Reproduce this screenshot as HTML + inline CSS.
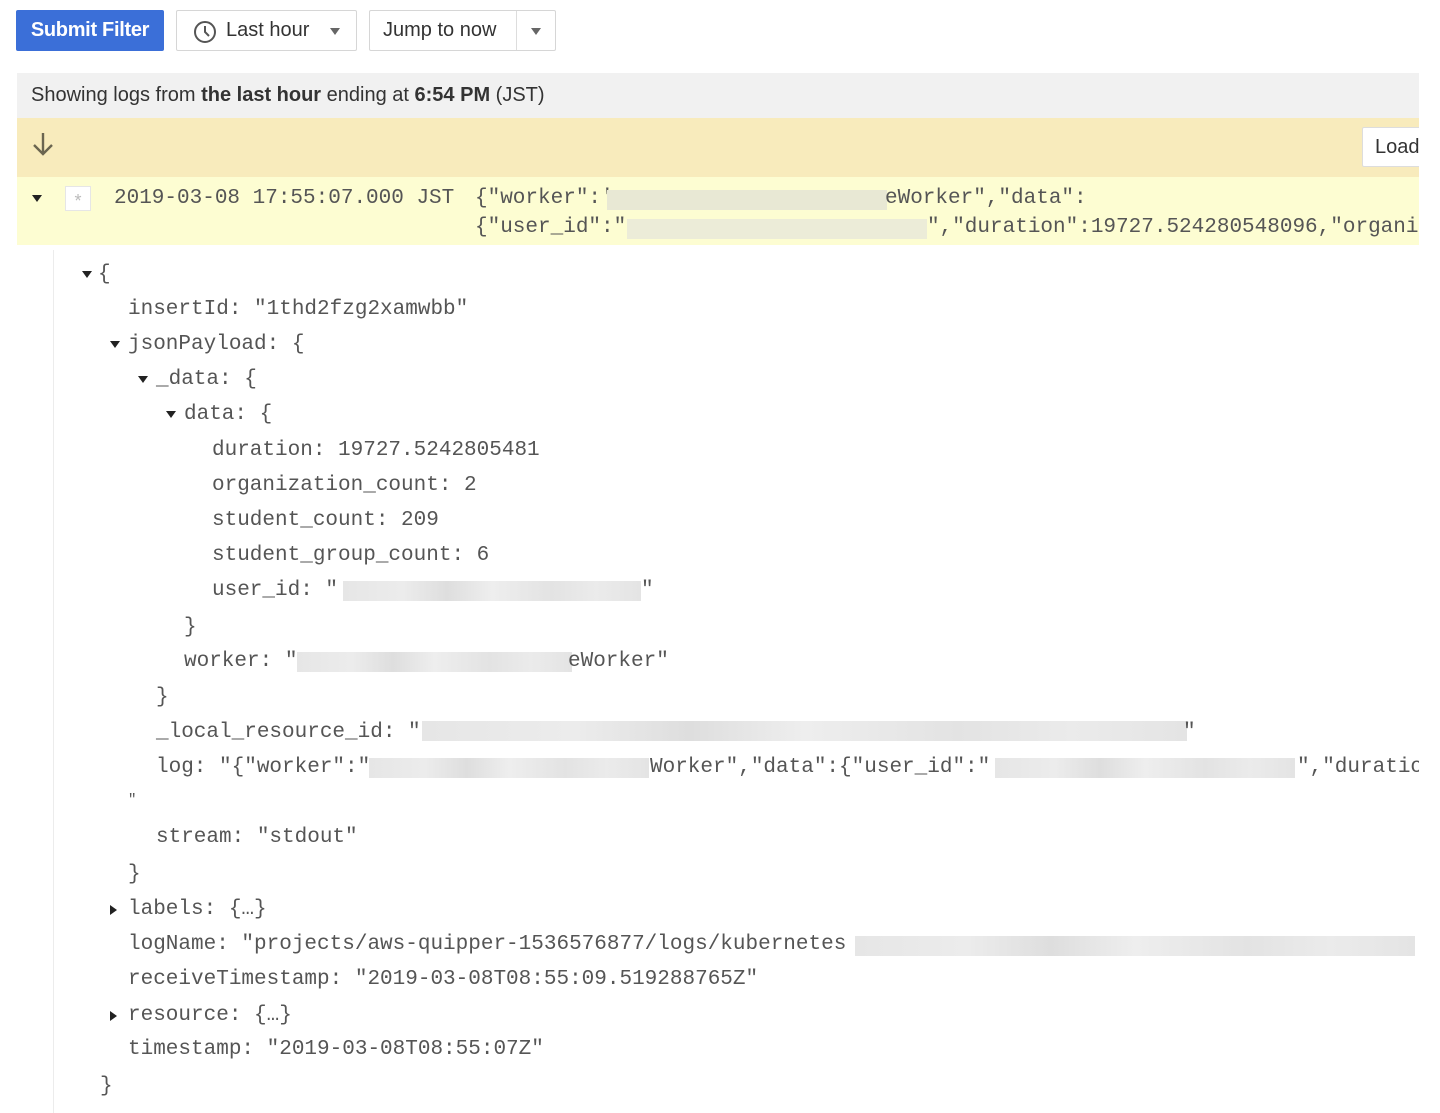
<!DOCTYPE html>
<html><head><meta charset="utf-8"><style>
*{margin:0;padding:0;box-sizing:border-box}
body{width:1440px;height:1113px;background:#fff;position:relative;overflow:hidden;font-family:"Liberation Sans",sans-serif;color:#333}
.btn{position:absolute;top:10px;height:41px;border:1px solid #d6d6d6;border-radius:2px;background:#fff;font-size:20px;line-height:39px;color:#333}
.m{font-family:"Liberation Mono",monospace;font-size:21px;color:#555;white-space:pre;position:absolute;line-height:24px;height:24px}
.b{position:absolute;height:20px;background:linear-gradient(90deg,#e6e6e6,#ececec 20%,#dedede 35%,#eee 50%,#e3e3e3 70%,#ebebeb 85%,#e4e4e4)}
.t{position:absolute;width:0;height:0;border-left:5px solid transparent;border-right:5px solid transparent;border-top:7px solid #222}
.r{position:absolute;width:0;height:0;border-top:5px solid transparent;border-bottom:5px solid transparent;border-left:7px solid #222}
#clip{position:absolute;left:0;top:3px;width:1419px;height:1110px;overflow:hidden}
</style></head><body>
<div style="position:absolute;left:16px;top:10px;width:148px;height:41px;background:#3b6fd8;border-radius:2px;color:#fff;font-size:20px;font-weight:bold;line-height:41px;text-align:center;letter-spacing:-0.3px">Submit Filter</div>
<div class="btn" style="left:176px;width:181px">
<svg style="position:absolute;left:16px;top:9px" width="24" height="24" viewBox="0 0 24 24"><circle cx="12" cy="12" r="10" fill="none" stroke="#555" stroke-width="2"/><path d="M12 6v6l4 4" fill="none" stroke="#555" stroke-width="2"/></svg>
<span style="position:absolute;left:49px">Last hour</span>
<div class="t" style="left:153px;top:17px;border-top-color:#666"></div></div>
<div class="btn" style="left:369px;width:187px">
<span style="position:absolute;left:13px">Jump to now</span>
<div style="position:absolute;left:146px;top:0;width:1px;height:39px;background:#ddd"></div>
<div class="t" style="left:161px;top:17px;border-top-color:#666"></div></div>

<div style="position:absolute;left:17px;top:73px;width:1402px;height:45px;background:#f1f1f1;font-size:20px;line-height:45px;padding-left:14px;color:#333">Showing logs from <b>the last hour</b> ending at <b>6:54 PM</b> (JST)</div>
<div style="position:absolute;left:17px;top:118px;width:1402px;height:59px;background:#f8ebbc"></div>
<svg style="position:absolute;left:31px;top:130px" width="24" height="28" viewBox="0 0 24 28"><path d="M12 3v21M3 15l9 9 9-9" fill="none" stroke="#6b6550" stroke-width="2.4"/></svg>
<div style="position:absolute;left:1362px;top:127px;width:70px;height:40px;background:#fff;border:1px solid #ddd;border-radius:2px;font-size:20px;line-height:38px;padding-left:12px;color:#333">Load</div>
<div style="position:absolute;left:1419px;top:118px;width:21px;height:60px;background:#fff"></div>
<div style="position:absolute;left:17px;top:177px;width:1402px;height:68px;background:#fdfdd2"></div>
<div class="t" style="left:32px;top:195px"></div>
<div style="position:absolute;left:65px;top:186px;width:26px;height:25px;background:#fff;border:1px solid #e6e6e6;color:#bbb;font-size:18px;text-align:center;line-height:28px">*</div>
<div style="position:absolute;left:53px;top:250px;width:1px;height:863px;background:#ececec"></div>

<div id="clip">
<div class="m" style="left:114px;top:184px">2019-03-08 17:55:07.000 JST</div>
<div class="m" style="left:475px;top:184px">{"worker":'</div>
<div class="b" style="left:607px;top:187px;width:280px;background:#e8e8d4"></div>
<div class="m" style="left:885px;top:184px">eWorker","data":</div>
<div class="m" style="left:475px;top:213px">{"user_id":"</div>
<div class="b" style="left:627px;top:216px;width:300px;background:#ececd8"></div>
<div class="m" style="left:927px;top:213px">","duration":19727.524280548096,"organization_count":2</div>

<div class="t" style="left:82px;top:268px"></div><div class="m" style="left:98px;top:260px">{</div>
<div class="m" style="left:128px;top:295px">insertId: "1thd2fzg2xamwbb"</div>
<div class="t" style="left:110px;top:338px"></div><div class="m" style="left:128px;top:330px">jsonPayload: {</div>
<div class="t" style="left:138px;top:373px"></div><div class="m" style="left:156px;top:365px">_data: {</div>
<div class="t" style="left:166px;top:408px"></div><div class="m" style="left:184px;top:400px">data: {</div>
<div class="m" style="left:212px;top:436px">duration: 19727.5242805481</div>
<div class="m" style="left:212px;top:471px">organization_count: 2</div>
<div class="m" style="left:212px;top:506px">student_count: 209</div>
<div class="m" style="left:212px;top:541px">student_group_count: 6</div>
<div class="m" style="left:212px;top:576px">user_id: "</div>
<div class="b" style="left:343px;top:578px;width:298px"></div>
<div class="m" style="left:641px;top:576px">"</div>
<div class="m" style="left:184px;top:613px">}</div>
<div class="m" style="left:184px;top:647px">worker: "</div>
<div class="b" style="left:297px;top:649px;width:275px"></div>
<div class="m" style="left:568px;top:647px">eWorker"</div>
<div class="m" style="left:156px;top:683px">}</div>
<div class="m" style="left:156px;top:718px">_local_resource_id: "</div>
<div class="b" style="left:422px;top:718px;width:765px"></div>
<div class="m" style="left:1183px;top:718px">"</div>
<div class="m" style="left:156px;top:753px">log: "{"worker":"</div>
<div class="b" style="left:369px;top:755px;width:280px"></div>
<div class="m" style="left:650px;top:753px">Worker","data":{"user_id":"</div>
<div class="b" style="left:995px;top:755px;width:300px"></div>
<div class="m" style="left:1297px;top:753px">","duration":19727</div>
<div class="m" style="left:128px;top:785px;font-size:14px">"</div>
<div class="m" style="left:156px;top:823px">stream: "stdout"</div>
<div class="m" style="left:128px;top:860px">}</div>
<div class="r" style="left:110px;top:902px"></div><div class="m" style="left:128px;top:895px">labels: {…}</div>
<div class="m" style="left:128px;top:930px">logName: "projects/aws-quipper-1536576877/logs/kubernetes</div>
<div class="b" style="left:855px;top:933px;width:560px"></div>
<div class="m" style="left:128px;top:965px">receiveTimestamp: "2019-03-08T08:55:09.519288765Z"</div>
<div class="r" style="left:110px;top:1008px"></div><div class="m" style="left:128px;top:1001px">resource: {…}</div>
<div class="m" style="left:128px;top:1035px">timestamp: "2019-03-08T08:55:07Z"</div>
<div class="m" style="left:100px;top:1072px">}</div>
</div>
</body></html>
